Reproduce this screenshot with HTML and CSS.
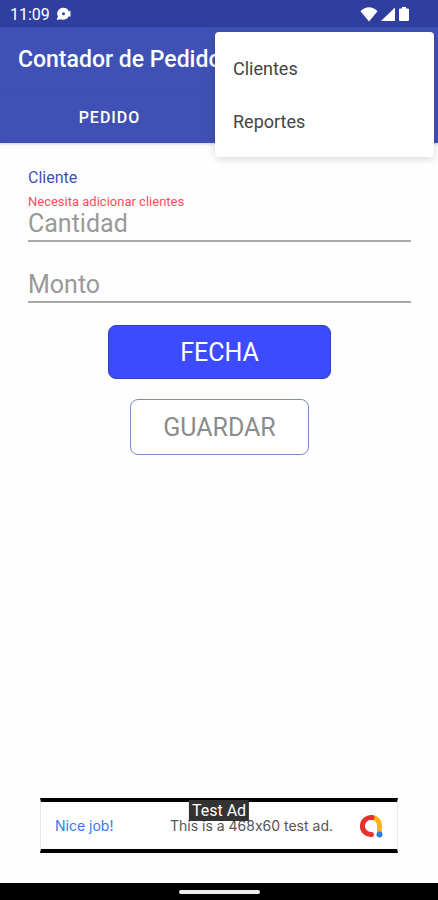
FILE: index.html
```html
<!DOCTYPE html>
<html lang="es">
<head>
  <meta charset="utf-8">
  <meta name="viewport" content="width=device-width, initial-scale=1">
  <title>Contador de Pedidos</title>
  <link rel="stylesheet" href="styles.css">
</head>
<body>

  <div class="status-bar">
    <span class="time">11:09</span>
    <svg class="notification" width="16" height="14" viewBox="0 0 16 14">
      <path fill="#fff" fill-rule="evenodd" d="M7.500 .8a5.800 5.800 0 0 1 5.400 3.600L14.500 3.800v6l-1.700-.6A5.800 5.800 0 0 1 5 12.200L.6 13l1.400-3.500A5.800 5.800 0 0 1 7.500 .8zm0 4.500a1.500 1.500 0 1 0 0 3 1.500 1.500 0 0 0 0-3z"/>
    </svg>
    <div class="status-icons">
      <svg width="18" height="16" viewBox="0 0 18 16">
        <path fill="#fff" d="M9 15.500L.5 5.200C3 2.500 6 1.300 9 1.300s6 1.200 8.500 3.900z"/>
      </svg>
      <svg width="16" height="16" viewBox="0 0 16 16">
        <path fill="#fff" d="M15 1.500v13.500H1z"/>
      </svg>
      <svg width="12" height="16" viewBox="0 0 12 16">
        <path fill="#fff" d="M4 1h4v1.500h2q1 0 1 1V14q0 1-1 1H2q-1 0-1-1V3.500q0-1 1-1h2z"/>
      </svg>
    </div>
  </div>

  <header class="app-bar">
    <h1 class="title">Contador de Pedidos</h1>
    <nav class="tabs">
      <button class="tab">PEDIDO</button>
    </nav>
  </header>

  <div class="menu">
    <button class="menu-item">Clientes</button>
    <button class="menu-item">Reportes</button>
  </div>

  <main class="content">
    <form class="form">
      <div class="client">Cliente</div>
      <div class="error">Necesita adicionar clientes</div>
      <div class="fields">
        <input class="field" type="text" placeholder="Cantidad" aria-label="Cantidad">
        <input class="field" type="text" placeholder="Monto" aria-label="Monto">
      </div>
      <button class="button date" type="button">FECHA</button>
      <button class="button save" type="button">GUARDAR</button>
    </form>
  </main>

  <div class="ad">
    <span class="ad-badge">Test Ad</span>
    <span class="ad-title">Nice job!</span>
    <span class="ad-text">This is a 468x60 test ad.</span>
    <svg class="ad-logo" width="24" height="24" viewBox="0 0 24 24" fill="none" stroke-width="5" stroke-linecap="round">
      <path stroke="#fbb514" d="M12 3.500c5 0 8.500 3.500 8.500 8.500v8"/>
      <path stroke="#e5322d" d="M13 3.600A8.500 8.500 0 1 0 12.500 20.500"/>
      <circle cx="20.500" cy="20.500" r="3" fill="#2a7de1"/>
    </svg>
  </div>

  <div class="nav-bar">
    <div class="nav-handle"></div>
  </div>

</body>
</html>
```
FILE: styles.css
```css
* {
  box-sizing: border-box;
}

body {
  position: relative;
  display: flex;
  flex-direction: column;
  min-height: 100vh;
  margin: 0;
  background-color: #fefefe;
  font-family: Roboto, sans-serif;
}

button,
input {
  font-family: inherit;
}

.status-bar {
  display: flex;
  align-items: center;
  height: 27px;
  padding: 1px 28px 0 10px;
  background-color: #303f9f; /* Darker than the app bar */
  color: #fff;
}

.time {
  font-size: 16px;
}

.notification {
  margin-left: 6px;
}

.status-icons {
  display: flex;
  gap: 2px;
  margin-left: auto;
}

.app-bar {
  background-color: #3f51b5;
  color: #fff;
  box-shadow: 0 1px 3px rgba(0, 0, 0, 0.2);
}

.title {
  margin: 0;
  padding: 2px 18px 0;
  font-size: 23px;
  font-weight: 500;
  line-height: 62px;
  border-bottom: 1px solid #3c4dae;
}

.tabs {
  display: flex;
}

.tab {
  width: 50%;
  height: 51px;
  padding: 0;
  border: none;
  background: none;
  color: #fff;
  font-size: 16px;
  font-weight: 500;
  letter-spacing: 1px;
}

/* Overflow menu, drawn over the app bar */
.menu {
  position: absolute;
  top: 32px;
  right: 4px;
  width: 50%;
  padding: 10px 0 9px;
  border-radius: 4px;
  background-color: #fff;
  box-shadow: 0 2px 8px rgba(0, 0, 0, 0.15);
}

.menu-item {
  display: block;
  width: 100%;
  height: 53px;
  padding: 0 18px;
  border: none;
  background: none;
  color: #444;
  font-size: 18px;
  text-align: left;
}

.content {
  flex: 1;
  padding: 25px 27px 24px 28px;
}

.form {
  display: flex;
  flex-direction: column;
}

.client {
  color: #3f51b5;
  font-size: 16px;
  line-height: 20px;
}

.error {
  margin-top: 6px;
  color: #ff4d5e;
  font-size: 13px;
  line-height: 16px;
}

.fields {
  display: grid;
  gap: 29px;
  margin-bottom: 22px;
}

.field {
  width: 100%;
  height: 32px;
  padding: 0 0 4px;
  border: none;
  border-bottom: 2px solid #aaa;
  background: none;
  color: #333;
  font-size: 25px;
}

.field::placeholder {
  color: #999;
}

.button {
  align-self: center;
  border-radius: 8px;
  font-size: 25px;
}

.date {
  width: 58%;
  height: 54px;
  margin-bottom: 20px;
  border: 1px solid #303fc8;
  background-color: #3d4bff;
  color: #fff;
}

.save {
  height: 56px;
  padding: 0 32px;
  border: 1px solid #7f87cc;
  background-color: #fff;
  color: #8c8c8c;
}

.ad {
  position: relative;
  display: flex;
  align-items: center;
  height: 55px;
  margin: 0 40px 30px;
  padding: 0 14px;
  border: 1px solid #e8e8e8;
  border-top: 4px solid #000;
  border-bottom: 4px solid #000;
  background-color: #fff;
  font-family: Inter, sans-serif;
  font-size: 14px;
  font-variant-ligatures: no-contextual; /* Keeps the x in 468x60 a letter */
}

.ad-badge {
  position: absolute;
  top: -2px;
  left: 50%;
  transform: translateX(-50%);
  padding: 0 3px;
  background-color: #333;
  color: #fff;
  font-family: Roboto, sans-serif;
  font-size: 16px;
  line-height: 21px;
}

.ad-title {
  color: #2f7bea;
}

.ad-text {
  margin-left: auto;
  color: #555;
}

.ad-logo {
  margin-left: 26px;
}

.nav-bar {
  display: flex;
  align-items: center;
  justify-content: center;
  height: 17px;
  background-color: #000;
}

.nav-handle {
  width: 81px;
  height: 4px;
  border-radius: 2px;
  background-color: #eee;
}
```
